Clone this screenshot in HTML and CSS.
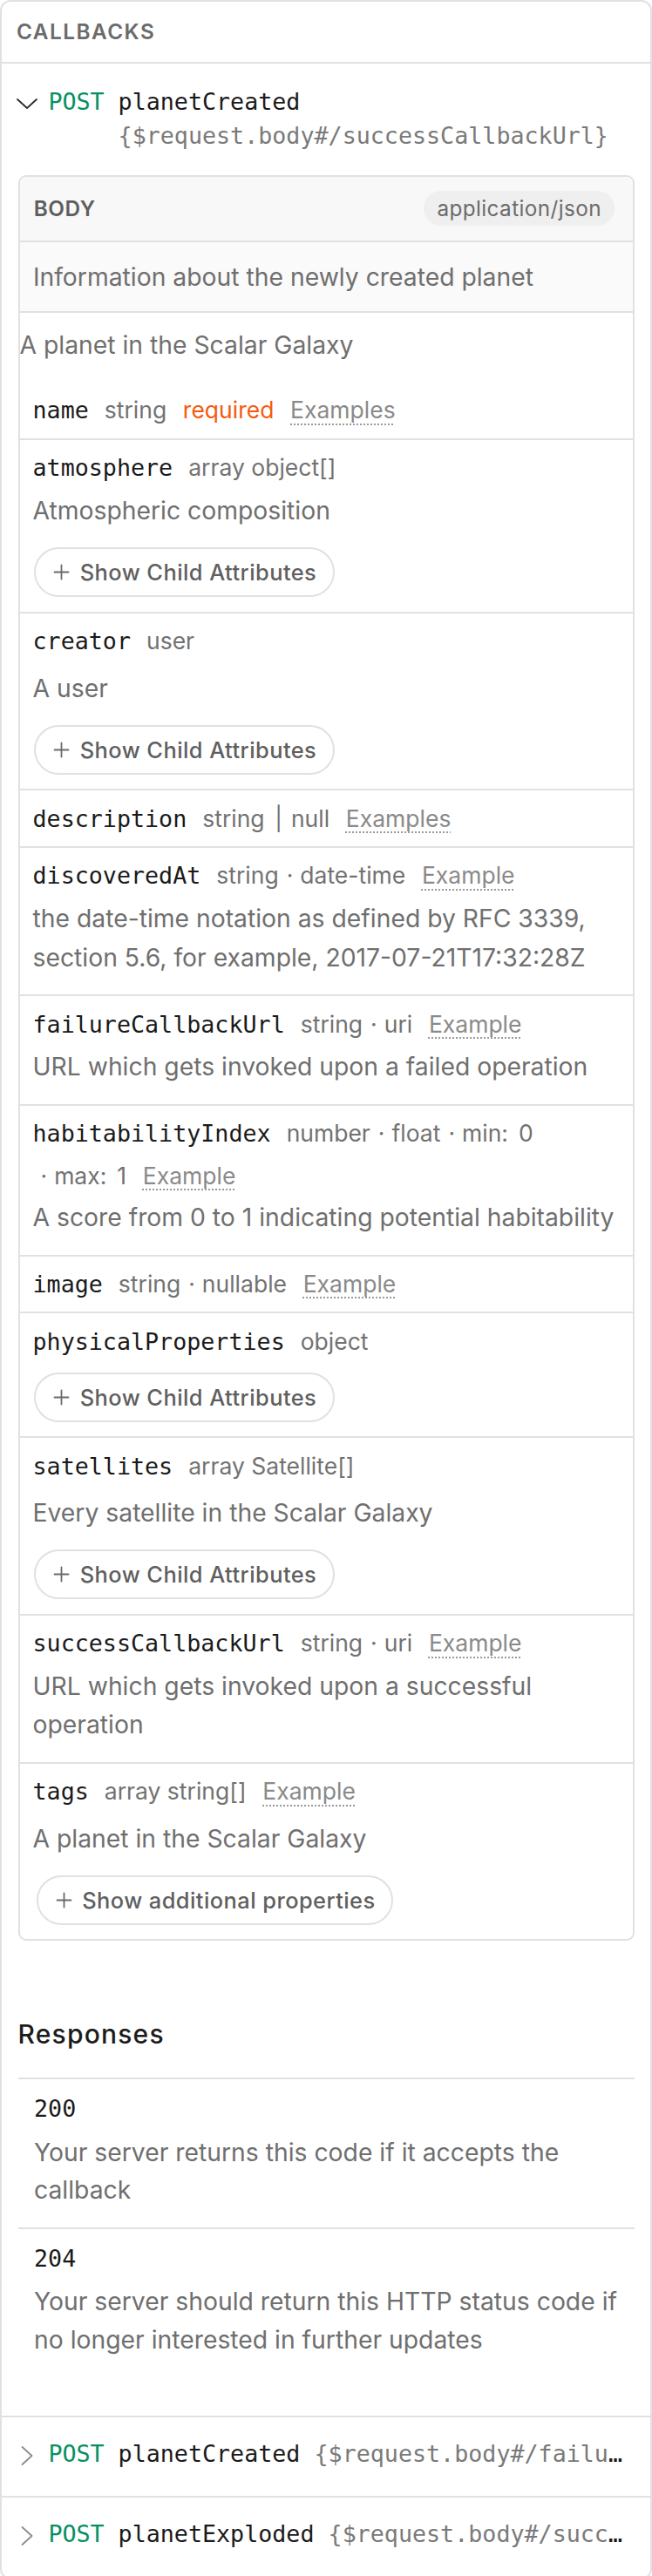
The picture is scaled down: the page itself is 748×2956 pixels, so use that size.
FILE: index.html
```html
<!DOCTYPE html>
<html lang="en">
<head>
<meta charset="utf-8">
<title>Callbacks</title>
<link rel="stylesheet" href="styles.css">
</head>
<body>
<section class="card">
  <header class="card-head">CALLBACKS</header>

  <div class="cb-open">
    <div class="cb-summary">
      <span class="chev-slot">
        <svg class="chev-down" width="24" height="12" viewBox="0 0 24 12"><path d="M1 1 L12 11 L23 1" fill="none" stroke="#2b2b2b" stroke-width="1.8" stroke-linecap="round" stroke-linejoin="round"/></svg>
      </span>
      <span class="method">POST</span>
      <span class="cb-path">planetCreated <span class="cb-url">{$request.body#/successCallbackUrl}</span></span>
    </div>

    <div class="cb-body">
      <div class="body-box">
        <div class="bb-head">
          <span class="bb-label">BODY</span>
          <span class="pill">application/json</span>
        </div>
        <div class="bb-desc">Information about the newly created planet</div>
        <div class="schema-desc">A planet in the Scalar Galaxy</div>

        <div class="prop first">
          <div class="prop-head">
            <span class="prop-name">name</span>
            <span class="prop-type">string</span>
            <span class="prop-req">required</span>
            <span class="prop-ex">Examples</span>
          </div>
        </div>

        <div class="prop">
          <div class="prop-head">
            <span class="prop-name">atmosphere</span>
            <span class="prop-type">array object[]</span>
          </div>
          <div class="prop-desc">Atmospheric composition</div>
          <div class="child-btn"><svg width="19" height="19" viewBox="0 0 19 19"><path d="M9.5 1.5 V17.5 M1.5 9.5 H17.5" stroke="#6a6a6a" stroke-width="1.8" stroke-linecap="round"/></svg><span>Show Child Attributes</span></div>
        </div>

        <div class="prop">
          <div class="prop-head">
            <span class="prop-name">creator</span>
            <span class="prop-type">user</span>
          </div>
          <div class="prop-desc obj-desc">A user</div>
          <div class="child-btn"><svg width="19" height="19" viewBox="0 0 19 19"><path d="M9.5 1.5 V17.5 M1.5 9.5 H17.5" stroke="#6a6a6a" stroke-width="1.8" stroke-linecap="round"/></svg><span>Show Child Attributes</span></div>
        </div>

        <div class="prop">
          <div class="prop-head">
            <span class="prop-name">description</span>
            <span class="prop-type">string<span class="bar">|</span>null</span>
            <span class="prop-ex">Examples</span>
          </div>
        </div>

        <div class="prop">
          <div class="prop-head">
            <span class="prop-name">discoveredAt</span>
            <span class="prop-type">string</span>
            <span class="prop-type dot">date-time</span>
            <span class="prop-ex">Example</span>
          </div>
          <div class="prop-desc">the date-time notation as defined by RFC 3339, section 5.6, for example, 2017-07-21T17:32:28Z</div>
        </div>

        <div class="prop">
          <div class="prop-head">
            <span class="prop-name">failureCallbackUrl</span>
            <span class="prop-type">string</span>
            <span class="prop-type dot">uri</span>
            <span class="prop-ex">Example</span>
          </div>
          <div class="prop-desc">URL which gets invoked upon a failed operation</div>
        </div>

        <div class="prop">
          <div class="prop-head">
            <span class="prop-name">habitabilityIndex</span>
            <span class="prop-type">number</span>
            <span class="prop-type dot">float</span>
            <span class="prop-type dot">min:<span class="val">0</span></span>
            <span class="prop-type dot">max:<span class="val">1</span></span>
            <span class="prop-ex">Example</span>
          </div>
          <div class="prop-desc">A score from 0 to 1 indicating potential habitability</div>
        </div>

        <div class="prop">
          <div class="prop-head">
            <span class="prop-name">image</span>
            <span class="prop-type">string</span>
            <span class="prop-type dot">nullable</span>
            <span class="prop-ex">Example</span>
          </div>
        </div>

        <div class="prop">
          <div class="prop-head">
            <span class="prop-name">physicalProperties</span>
            <span class="prop-type">object</span>
          </div>
          <div class="child-btn"><svg width="19" height="19" viewBox="0 0 19 19"><path d="M9.5 1.5 V17.5 M1.5 9.5 H17.5" stroke="#6a6a6a" stroke-width="1.8" stroke-linecap="round"/></svg><span>Show Child Attributes</span></div>
        </div>

        <div class="prop">
          <div class="prop-head">
            <span class="prop-name">satellites</span>
            <span class="prop-type">array Satellite[]</span>
          </div>
          <div class="prop-desc obj-desc">Every satellite in the Scalar Galaxy</div>
          <div class="child-btn"><svg width="19" height="19" viewBox="0 0 19 19"><path d="M9.5 1.5 V17.5 M1.5 9.5 H17.5" stroke="#6a6a6a" stroke-width="1.8" stroke-linecap="round"/></svg><span>Show Child Attributes</span></div>
        </div>

        <div class="prop">
          <div class="prop-head">
            <span class="prop-name">successCallbackUrl</span>
            <span class="prop-type">string</span>
            <span class="prop-type dot">uri</span>
            <span class="prop-ex">Example</span>
          </div>
          <div class="prop-desc">URL which gets invoked upon a successful operation</div>
        </div>

        <div class="prop last">
          <div class="prop-head">
            <span class="prop-name">tags</span>
            <span class="prop-type">array string[]</span>
            <span class="prop-ex">Example</span>
          </div>
          <div class="prop-desc obj-desc">A planet in the Scalar Galaxy</div>
          <div class="child-btn wide"><svg width="19" height="19" viewBox="0 0 19 19"><path d="M9.5 1.5 V17.5 M1.5 9.5 H17.5" stroke="#6a6a6a" stroke-width="1.8" stroke-linecap="round"/></svg><span>Show additional properties</span></div>
        </div>
      </div>

      <h3 class="resp-title">Responses</h3>
      <div class="resp-list">
        <div class="resp-item">
          <div class="resp-code">200</div>
          <div class="resp-desc">Your server returns this code if it accepts the callback</div>
        </div>
        <div class="resp-item">
          <div class="resp-code">204</div>
          <div class="resp-desc">Your server should return this HTTP status code if no longer interested in further updates</div>
        </div>
      </div>
    </div>
  </div>

  <div class="cb-row">
    <span class="chev-slot">
      <svg class="chev-right" width="14" height="22" viewBox="0 0 14 22"><path d="M1.5 1 L12.5 11 L1.5 21" fill="none" stroke="#8c8c8c" stroke-width="1.8" stroke-linecap="round" stroke-linejoin="round"/></svg>
    </span>
    <span class="method">POST</span>
    <span class="cb-line">planetCreated <span class="cb-url">{$request.body#/failureCallbackUrl}</span></span>
  </div>

  <div class="cb-row last-row">
    <span class="chev-slot">
      <svg class="chev-right" width="14" height="22" viewBox="0 0 14 22"><path d="M1.5 1 L12.5 11 L1.5 21" fill="none" stroke="#8c8c8c" stroke-width="1.8" stroke-linecap="round" stroke-linejoin="round"/></svg>
    </span>
    <span class="method">POST</span>
    <span class="cb-line">planetExploded <span class="cb-url">{$request.body#/successCallbackUrl}</span></span>
  </div>
</section>
</body>
</html>
```

FILE: styles.css
```css
* { box-sizing: border-box; }

body {
  margin: 0;
  background: #ffffff;
  font-family: Inter, "Noto Sans", sans-serif;
  color: #1b1b1b;
}

.card {
  width: 748px;
  border: 2px solid #e1e1e1;
  border-radius: 12px;
  overflow: hidden;
}

.card-head {
  height: 70.7px;
  display: flex;
  align-items: center;
  padding: 0 17px;
  border-bottom: 2px solid #e1e1e1;
  font-size: 24.3px;
  font-weight: 600;
  letter-spacing: 1.5px;
  color: #6b6b6b;
}

/* callback summary */
.cb-summary,
.cb-row {
  display: flex;
  align-items: flex-start;
  font-family: "DejaVu Sans Mono", "Liberation Mono", monospace;
  font-size: 26.7px;
  line-height: 39px;
}

.cb-summary {
  padding: 24.55px 17px 0 17px;
}

.chev-slot {
  width: 24px;
  flex: 0 0 24px;
  display: flex;
  justify-content: center;
  margin-right: 12.4px;
}

.chev-down { margin-top: 15.75px; }
.chev-right { margin-top: 11px; }

.method {
  color: #069061;
  margin-right: 15.9px;
  flex: 0 0 auto;
}

.cb-path {
  color: #1a1a1a;
  min-width: 0;
}

.cb-url { color: #7a7a7a; }

.cb-body {
  padding: 25.45px 18.5px 44.75px;
}

/* body box */
.body-box {
  border: 2px solid #e1e1e1;
  border-radius: 9px;
  overflow: hidden;
}

.bb-head {
  height: 75px;
  display: flex;
  align-items: center;
  justify-content: space-between;
  padding: 0 20.6px 0 16.2px;
  background: #f8f8f8;
  border-bottom: 2px solid #e1e1e1;
}

.bb-label {
  font-size: 24.3px;
  font-weight: 600;
  letter-spacing: 0.6px;
  color: #5e5e5e;
}

.pill {
  height: 40px;
  display: flex;
  align-items: center;
  padding: 0 15px;
  background: #efefef;
  border-radius: 20px;
  font-size: 24.3px;
  letter-spacing: 0.4px;
  color: #6b6b6b;
}

.bb-desc {
  background: #fafafa;
  padding: 17.9px 18px 16.8px 15.4px;
  font-size: 28.3px;
  line-height: 44.9px;
  color: #6f6f6f;
  border-bottom: 2px solid #e1e1e1;
}

.schema-desc {
  padding: 15px 0 19.8px 0;
  font-size: 28.3px;
  line-height: 44.9px;
  color: #6f6f6f;
}

/* properties */
.prop {
  display: flex;
  flex-direction: column;
  border-top: 2px solid #e1e1e1;
  padding: 11.4px 16px 11.25px 15px;
}

.prop.first { border-top: none; }
.prop.last { padding-bottom: 10.55px; }

.prop-head {
  display: flex;
  flex-wrap: wrap;
  align-items: baseline;
  row-gap: 7.6px;
  padding-right: 12px;
  line-height: 40px;
}

.prop-name {
  font-family: "DejaVu Sans Mono", "Liberation Mono", monospace;
  font-size: 26.7px;
  color: #1a1a1a;
  margin-right: 18px;
}

.prop-type {
  font-size: 26.5px;
  color: #727272;
}

.prop-type.dot::before {
  content: "·";
  margin: 0 8px 0 9px;
}

.bar { margin: 0 10px 0 11.5px; }
.val { margin-left: 12px; }

.prop-req {
  font-size: 26.5px;
  color: #f65a0f;
  margin-left: 18.7px;
}

.prop-ex {
  font-size: 26.5px;
  color: #8a8a8a;
  margin-left: 18.7px;
  text-decoration: underline dotted #9a9a9a;
  text-decoration-thickness: 1.5px;
  text-underline-offset: 6px;
}

.prop-desc {
  margin: 6.55px 0 8.25px;
  font-size: 28.3px;
  line-height: 44.9px;
  color: #6f6f6f;
}

.prop-desc.obj-desc { margin-top: 11.35px; margin-bottom: 7.55px; }

.child-btn {
  display: flex;
  align-items: center;
  gap: 11.7px;
  align-self: flex-start;
  height: 57px;
  margin: 11.55px 0 5.45px 1.5px;
  padding: 0 18.5px 0 20px;
  border: 2px solid #e1e1e1;
  border-radius: 29px;
  font-size: 25.4px;
  font-weight: 500;
  letter-spacing: 0.45px;
  color: #5f5f5f;
}

.prop-head + .child-btn { margin-top: 14.95px; }
.child-btn.wide { margin-left: 4px; }

/* responses */
.resp-title {
  margin: 85.5px 0 26.9px;
  font-size: 30px;
  line-height: 44.9px;
  font-weight: 500;
  letter-spacing: 1.2px;
  color: #1c1c1c;
}

.resp-item {
  border-top: 2px solid #e1e1e1;
  padding: 14.25px 16px 20.2px 18.5px;
}

.resp-code {
  font-family: "DejaVu Sans Mono", "Liberation Mono", monospace;
  font-size: 26.7px;
  line-height: 39px;
  color: #1a1a1a;
}

.resp-desc {
  margin-top: 9.4px;
  font-size: 28.3px;
  line-height: 43.4px;
  color: #6f6f6f;
}

/* collapsed callbacks */
.cb-row {
  border-top: 2px solid #e1e1e1;
  padding: 22.25px 24px 28.75px 17px;
}

.cb-row.last-row { padding-bottom: 30.5px; }

.cb-line {
  color: #1a1a1a;
  flex: 1 1 auto;
  min-width: 0;
  white-space: nowrap;
  overflow: hidden;
  text-overflow: ellipsis;
}
```
